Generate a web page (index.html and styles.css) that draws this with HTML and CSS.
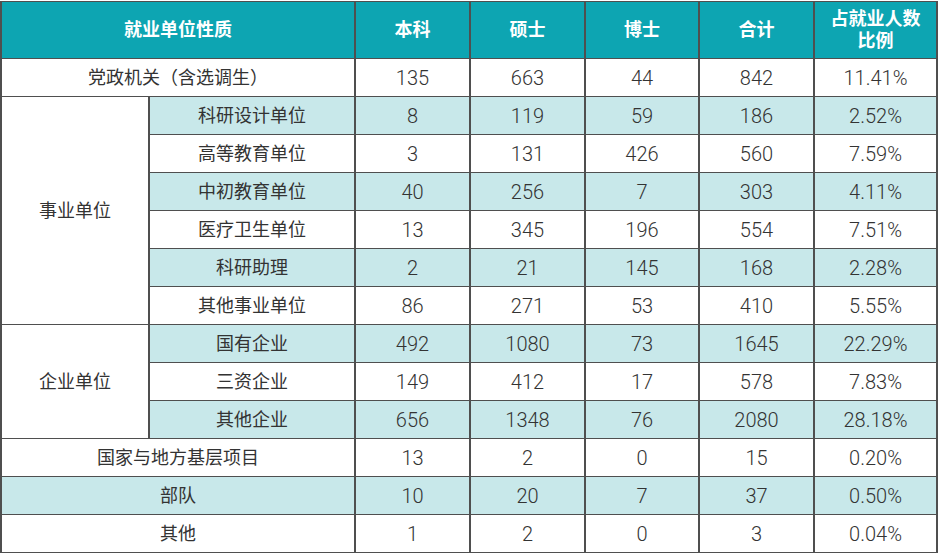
FILE: index.html
```html
<!DOCTYPE html>
<html lang="zh">
<head>
<meta charset="utf-8">
<link rel="stylesheet" href="styles.css">
</head>
<body>
<table class="tbl">
<colgroup>
<col class="c1"><col class="c2"><col class="c3"><col class="c3"><col class="c5"><col class="c3"><col class="c7">
</colgroup>
<thead>
<tr><th colspan="2">就业单位性质</th><th>本科</th><th>硕士</th><th>博士</th><th>合计</th><th>占就业人数<br>比例</th></tr>
</thead>
<tbody>
<tr><td class="nm" colspan="2">党政机关（含选调生）</td><td>135</td><td>663</td><td>44</td><td>842</td><td>11.41%</td></tr>
<tr class="hl"><td rowspan="6" class="nm plain">事业单位</td><td class="nm">科研设计单位</td><td>8</td><td>119</td><td>59</td><td>186</td><td>2.52%</td></tr>
<tr><td class="nm">高等教育单位</td><td>3</td><td>131</td><td>426</td><td>560</td><td>7.59%</td></tr>
<tr class="hl"><td class="nm">中初教育单位</td><td>40</td><td>256</td><td>7</td><td>303</td><td>4.11%</td></tr>
<tr><td class="nm">医疗卫生单位</td><td>13</td><td>345</td><td>196</td><td>554</td><td>7.51%</td></tr>
<tr class="hl"><td class="nm">科研助理</td><td>2</td><td>21</td><td>145</td><td>168</td><td>2.28%</td></tr>
<tr><td class="nm">其他事业单位</td><td>86</td><td>271</td><td>53</td><td>410</td><td>5.55%</td></tr>
<tr class="hl"><td rowspan="3" class="nm plain">企业单位</td><td class="nm">国有企业</td><td>492</td><td>1080</td><td>73</td><td>1645</td><td>22.29%</td></tr>
<tr><td class="nm">三资企业</td><td>149</td><td>412</td><td>17</td><td>578</td><td>7.83%</td></tr>
<tr class="hl"><td class="nm">其他企业</td><td>656</td><td>1348</td><td>76</td><td>2080</td><td>28.18%</td></tr>
<tr><td class="nm" colspan="2">国家与地方基层项目</td><td>13</td><td>2</td><td>0</td><td>15</td><td>0.20%</td></tr>
<tr class="hl"><td class="nm" colspan="2">部队</td><td>10</td><td>20</td><td>7</td><td>37</td><td>0.50%</td></tr>
<tr><td class="nm" colspan="2">其他</td><td>1</td><td>2</td><td>0</td><td>3</td><td>0.04%</td></tr>
</tbody>
</table>
</body>
</html>
```
FILE: styles.css
```css
html, body {
  margin: 0;
  padding: 0;
  background: #ffffff;
}
body {
  padding: 1px 0 0 0;
  font-family: Roboto, "Noto Sans CJK SC", sans-serif;
  color: #333333;
}
.tbl {
  border-collapse: collapse;
  table-layout: fixed;
  width: 936px;
  font-size: 20px;
  font-weight: 300;
}
.c1 { width: 148px; }
.c2 { width: 206px; }
.c3 { width: 115px; }
.c5 { width: 114px; }
.c7 { width: 123px; }
.tbl th, .tbl td {
  border-top: 1px solid #4f4f4f;
  border-bottom: 1px solid #4f4f4f;
  border-left: 2px solid #4f4f4f;
  border-right: 2px solid #4f4f4f;
  text-align: center;
  vertical-align: middle;
  padding: 0;
}
.tbl th {
  background: #0da5b2;
  color: #ffffff;
  font-weight: bold;
  font-size: 18px;
  height: 56px;
  line-height: 22px;
}
.tbl td {
  height: 37px;
  line-height: 22px;
}
.tbl td.nm {
  font-size: 18px;
  font-weight: 400;
}
.tbl tr.hl td {
  background: #c8e8ea;
}
.tbl tr.hl td.plain {
  background: #ffffff;
}
```
